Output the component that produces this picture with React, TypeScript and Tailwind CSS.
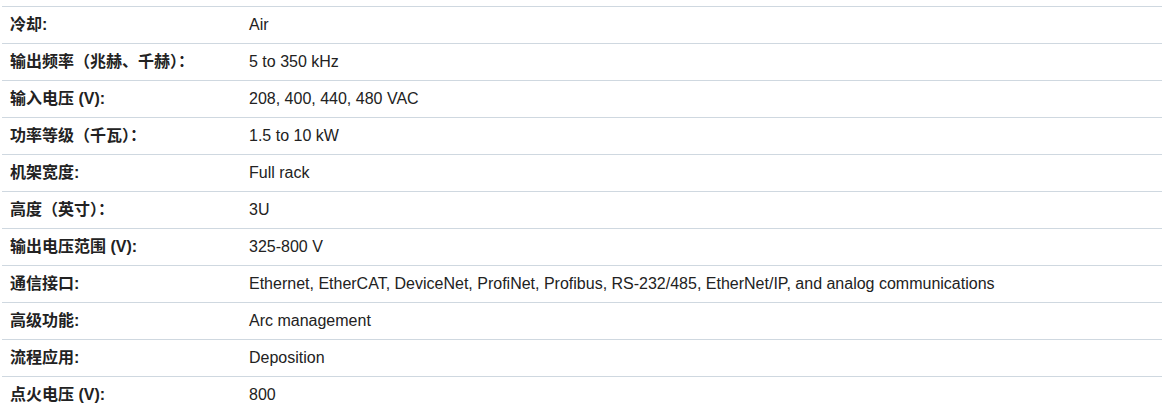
import React from "react";

const rows: [string, string][] = [
  ["冷却:", "Air"],
  ["输出频率（兆赫、千赫）：", "5 to 350 kHz"],
  ["输入电压 (V):", "208, 400, 440, 480 VAC"],
  ["功率等级（千瓦）：", "1.5 to 10 kW"],
  ["机架宽度:", "Full rack"],
  ["高度（英寸）：", "3U"],
  ["输出电压范围 (V):", "325-800 V"],
  ["通信接口:", "Ethernet, EtherCAT, DeviceNet, ProfiNet, Profibus, RS-232/485, EtherNet/IP, and analog communications"],
  ["高级功能:", "Arc management"],
  ["流程应用:", "Deposition"],
  ["点火电压 (V):", "800"],
];

export default function App() {
  return (
    <div
      className="bg-white w-[1163px] h-[419px] overflow-hidden pt-[6px] pl-[2px] pr-[1px] text-[16px] text-[#222]"
      style={{ fontFamily: '"Liberation Sans", Arial, "Noto Sans CJK SC", sans-serif' }}
    >
      {rows.map(([k, v], i) => (
        <div key={i} className="grid grid-cols-[239px_1fr] border-t border-[#cfd8e0] h-[37px] items-center">
          <div className="pl-2 font-bold">{k}</div>
          <div className="pl-2">{v}</div>
        </div>
      ))}
    </div>
  );
}
